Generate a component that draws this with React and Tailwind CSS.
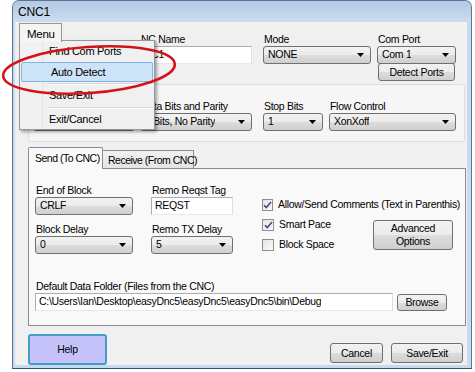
import React from 'react';

const btnBg =
  'bg-[linear-gradient(#f2f2f2_0%,#ebebeb_50%,#dddddd_50%,#cfcfcf_100%)] border border-[#707070] rounded-[3px]';

function Arrow() {
  return (
    <svg width="7" height="4" viewBox="0 0 7 4" className="shrink-0">
      <path d="M0 0h7L3.5 4z" fill="#000" />
    </svg>
  );
}

function Combo({ value, className = '' }) {
  return (
    <div className={`h-[18px] flex items-center justify-between pl-[4px] pr-[6px] ${btnBg} ${className}`}>
      <span className="truncate">{value}</span>
      <Arrow />
    </div>
  );
}

function TextBox({ value, className = '' }) {
  return (
    <div className={`h-[18px] flex items-center pl-[3px] bg-white border border-[#abadb3] border-b-[#e3e9ef] border-r-[#dbdfe6] ${className}`}>
      <span className="truncate">{value}</span>
    </div>
  );
}

function Label({ children, className = '' }) {
  return <div className={`h-[14px] leading-[14px] pl-[1px] whitespace-nowrap ${className}`}>{children}</div>;
}

function Field({ label, children, className = '' }) {
  return (
    <div className={`flex flex-col ${className}`}>
      <Label>{label}</Label>
      {children}
    </div>
  );
}

function Button({ children, className = '' }) {
  return (
    <div className={`flex items-center justify-center text-center leading-[13px] ${btnBg} ${className}`}>
      {children}
    </div>
  );
}

function Check({ checked, label }) {
  return (
    <div className="h-[20px] flex items-center">
      <div className="w-[12px] h-[12px] border border-[#8e8f8f] bg-linear-to-br from-[#e4e4e4] to-[#fafafa] flex items-center justify-center">
        {checked && (
          <svg width="9" height="8" viewBox="0 0 9 8">
            <path d="M1 4.2l2.3 2.4L8 1" fill="none" stroke="#3a4e7e" strokeWidth="1.6" />
          </svg>
        )}
      </div>
      <span className="ml-[5px] whitespace-nowrap">{label}</span>
    </div>
  );
}

function MenuItem({ children, active }) {
  return (
    <div className={`h-full flex items-center pl-[29px] ${active ? 'mx-[1px] my-[1px] pl-[28px] rounded-[2px] bg-[#cce3f8] border border-[#84b4e6]' : ''}`}>
      {children}
    </div>
  );
}

export default function App() {
  return (
    <div className="relative w-[475px] h-[372px] bg-white overflow-hidden text-[10.5px] tracking-[-0.3px] text-black font-['Liberation_Sans',Arial,sans-serif]">
      {/* window */}
      <div className="ml-[12px] w-[460px] h-[369px] border border-[#5a7694] border-b-[#2c5770] rounded-t-[7px] bg-[#c8daee] flex flex-col">
        <div className="h-[21px] pl-[5px] pt-[1px] flex items-center text-[12px] tracking-[-0.2px] rounded-t-[6px] bg-linear-to-b from-[#b3cae3] to-[#cbdcef]">
          CNC1
        </div>

        {/* client area */}
        <div className="ml-[2px] w-[452px] h-[343px] bg-[#f0f0f0] flex flex-col">
          {/* top row */}
          <div className="h-[62px] flex items-start">
            <div className="relative z-20 ml-[4px] mt-[1px] w-[43px] h-[19px] pl-[7px] pt-[2px] text-[11.5px] tracking-[-0.3px] bg-[#f5f5f5] border border-b-0 border-[#979797]">
              Menu
            </div>
            <Field label="NC Name" className="ml-[78px] mt-[10px] w-[112px]">
              <TextBox value="NC1" />
            </Field>
            <Field label="Mode" className="ml-[11px] mt-[10px] w-[108px]">
              <Combo value="NONE" />
            </Field>
            <Field label="Com Port" className="ml-[6px] mt-[10px] w-[79px]">
              <Combo value="Com 1" />
              <Button className="ml-[1px] w-[77px] h-[18px] -mt-[1px]">Detect Ports</Button>
            </Field>
          </div>

          {/* serial group */}
          <div className="ml-[13px] w-[437px] h-[58px] border border-[#d5dfe5] rounded-[3px] bg-[#f6f6f6] flex items-start pt-[14px] pl-[4px]">
            <Field label="" className="w-[102px]">
              <Combo value="" />
            </Field>
            <Field label="Data Bits and Parity" className="ml-[5px] w-[112px]">
              <Combo value="8 Bits, No Parity" />
            </Field>
            <Field label="Stop Bits" className="ml-[11px] w-[60px]">
              <Combo value="1" />
            </Field>
            <Field label="Flow Control" className="ml-[6px] w-[127px]">
              <Combo value="XonXoff" />
            </Field>
          </div>

          {/* tabs */}
          <div className="mt-[5px] ml-[13px] h-[21px] flex items-end tracking-[-0.5px]">
            <div className="relative z-10 w-[75px] h-[22px] -mb-[1px] pl-[6px] pt-[3px] bg-[#f9f9f9] border border-b-0 border-[#898c95] rounded-t-[2px] whitespace-nowrap">
              Send (To CNC)
            </div>
            <div className="w-[91px] h-[18px] pl-[5px] pt-[2px] bg-linear-to-b from-[#f2f2f2] to-[#e3e3e3] border border-b-0 border-l-0 border-[#898c95] whitespace-nowrap">
              Receive (From CNC)
            </div>
          </div>
          <div className="ml-[13px] w-[438px] h-[158px] border border-[#898c95] bg-[#f9f9f9] flex flex-col pl-[6px]">
            <div className="h-[110px] flex items-start">
              <div className="w-[98px] pt-[14px] flex flex-col">
                <Field label="End of Block">
                  <Combo value="CRLF" />
                </Field>
                <Field label="Block Delay" className="mt-[7px]">
                  <Combo value="0" />
                </Field>
              </div>
              <div className="ml-[18px] w-[82px] pt-[14px] flex flex-col">
                <Field label="Remo Reqst Tag">
                  <TextBox value="REQST" />
                </Field>
                <Field label="Remo TX Delay" className="mt-[7px]">
                  <Combo value="5" />
                </Field>
              </div>
              <div className="ml-[29px] w-[191px] pt-[26px] flex flex-col">
                <Check checked label="Allow/Send Comments (Text in Parenthis)" />
                <div className="flex items-start justify-between">
                  <div className="flex flex-col">
                    <Check checked label="Smart Pace" />
                    <Check label="Block Space" />
                  </div>
                  <Button className="mt-[5px] w-[80px] h-[30px] flex-col">
                    <span>Advanced</span>
                    <span>Options</span>
                  </Button>
                </div>
              </div>
            </div>
            <Label>Default Data Folder (Files from the CNC)</Label>
            <div className="flex items-start">
              <TextBox
                value={'C:\\Users\\Ian\\Desktop\\easyDnc5\\easyDnc5\\easyDnc5\\bin\\Debug'}
                className="w-[358px] h-[17px]"
              />
              <Button className="ml-[4px] mt-[1px] w-[50px] h-[17px]">Browse</Button>
            </div>
          </div>

          {/* bottom buttons */}
          <div className="mt-[8px] flex items-end">
            <div className="ml-[13px] w-[79px] h-[31px] flex items-center justify-center bg-[#c5c3fa] border-2 border-[#3e9fc8] rounded-[3px]">
              Help
            </div>
            <Button className="ml-auto mb-[2px] w-[53px] h-[20px]">Cancel</Button>
            <Button className="ml-[8px] mr-[4px] mb-[2px] w-[72px] h-[20px]">Save/Exit</Button>
          </div>
        </div>
      </div>

      {/* dropdown menu overlay */}
      <div className="absolute left-[19px] top-[40px] z-10 w-[136px] h-[90px] border border-[#979797] bg-[#f0f0f0] shadow-[2px_2px_3px_rgba(0,0,0,0.35)] text-[11px] tracking-[-0.3px]">
        <div className="absolute left-0 top-0 bottom-0 w-[23px] bg-[#f1f1f1] border-r border-r-[#e2e3e3]" />
        <div className="relative flex flex-col pt-[1px]">
          <div className="h-[19px]">
            <MenuItem>Find Com Ports</MenuItem>
          </div>
          <div className="h-[20px]">
            <MenuItem active>Auto Detect</MenuItem>
          </div>
          <div className="h-[5px] pt-[2px] ml-[27px] mr-[1px]">
            <div className="border-t border-[#d7d7d7] border-b border-b-white" />
          </div>
          <div className="h-[19px]">
            <MenuItem>Save/Exit</MenuItem>
          </div>
          <div className="h-[6px] pt-[2px] ml-[27px] mr-[1px]">
            <div className="border-t border-[#d7d7d7] border-b border-b-white" />
          </div>
          <div className="h-[17px]">
            <MenuItem>Exit/Cancel</MenuItem>
          </div>
        </div>
      </div>

      {/* red annotation ellipse */}
      <svg className="absolute left-0 top-0 z-30 pointer-events-none" width="190" height="110" viewBox="0 0 190 110">
        <ellipse cx="89" cy="70" rx="86" ry="23" transform="rotate(-4 89 70)" fill="none" stroke="#d3131b" strokeWidth="2.6" />
      </svg>
    </div>
  );
}
